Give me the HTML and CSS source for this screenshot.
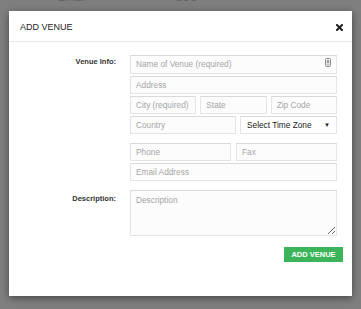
FILE: index.html
```html
<!doctype html>
<html>
<head>
<meta charset="utf-8">
<link rel="stylesheet" href="styles.css">
<title>Add Venue</title>
</head>
<body>

    <div class="behind"><span class="behind-email">Email</span><span class="behind-sso">SSO</span></div>

    <div class="modal">
        <header class="modal-header">
            <h1>ADD VENUE</h1>
            <button class="close" type="button" aria-label="Close">
                <svg width="7" height="7" viewBox="0 0 7 7"><path d="M1 1L6 6M6 1L1 6" stroke="#222" stroke-width="2" stroke-linecap="square"/></svg>
            </button>
        </header>

        <form class="modal-body">
            <label class="field-label">Venue Info:</label>
            <div class="fields">
                <div class="with-icon">
                    <input type="text" placeholder="Name of Venue (required)">
                    <svg class="field-icon" width="6" height="9" viewBox="0 0 6 9"><rect x="0.5" y="0.5" width="5" height="8" rx="1" fill="#eee" stroke="#888"/><path d="M3 2v3.2M3 6.2v1" stroke="#666" stroke-width="1.2"/></svg>
                </div>
                <input type="text" placeholder="Address">
                <div class="row row-three">
                    <input type="text" placeholder="City (required)">
                    <input type="text" placeholder="State">
                    <input type="text" placeholder="Zip Code">
                </div>
                <div class="row row-country">
                    <input type="text" placeholder="Country">
                    <div class="select">Select Time Zone<span class="caret">&#9660;</span></div>
                </div>

                <div class="row row-two group">
                    <input type="text" placeholder="Phone">
                    <input type="text" placeholder="Fax">
                </div>
                <input type="text" placeholder="Email Address">
            </div>

            <label class="field-label desc-label">Description:</label>
            <textarea placeholder="Description"></textarea>
        </form>

        <div class="modal-footer">
            <button class="btn-add" type="button">ADD VENUE</button>
        </div>
    </div>

</body>
</html>
```

FILE: styles.css
```css
html
{
    background:#7f7f7f;
}
body
{
    margin:0;
    height:309px;
    overflow:hidden;
    font-family:"Liberation Sans", Arial, sans-serif;
    color:#333;
}
.behind
{
    height:11px;
    overflow:hidden;
    font-size:11px;
    line-height:11px;
    color:#5e5e5e;
    position:relative;
}
.behind span
{
    position:absolute;
    top:-8px;
}
.behind-email { left:58px; }
.behind-sso { left:175px; }

.modal
{
    margin:0 9px;
    height:285px;
    background:#fff;
    box-shadow:0 2px 8px rgba(0,0,0,.45);
    display:flex;
    flex-direction:column;
}
.modal-header
{
    height:30px;
    padding:0 9px 0 11px;
    display:flex;
    align-items:center;
    justify-content:space-between;
    border-bottom:1px solid #e8e8e8;
}
h1
{
    margin:0;
    font:normal normal 9px/12px "Liberation Sans", Arial, sans-serif;
    color:#222;
    padding-top:1px;
}
.close
{
    border:none;
    background:none;
    padding:0;
    width:7px;
    height:7px;
    display:flex;
    margin-top:2px;
}
.modal-body
{
    margin:0;
    padding:11px 15px 0 9px;
    display:grid;
    grid-template-columns:98px 1fr;
    column-gap:14px;
    row-gap:9px;
}
.field-label
{
    text-align:right;
    font:normal bold 7.5px/10px "Liberation Sans", Arial, sans-serif;
    color:#333;
    padding-top:4px;
}
.desc-label
{
    padding-top:4px;
}
.fields
{
    display:flex;
    flex-direction:column;
    gap:2px;
}
.fields .group
{
    margin-top:7px;
}
input, textarea, .select
{
    box-sizing:border-box;
    width:100%;
    height:18px;
    margin:0;
    border:1px solid #e4e4e4;
    border-top-color:#d9d9d9;
    background:#fcfcfc;
    padding:0 5px;
    font:normal normal 8.3px/10px "Liberation Sans", Arial, sans-serif;
    color:#333;
    outline:none;
}
input::placeholder, textarea::placeholder
{
    color:#a5a5a5;
}
.with-icon
{
    position:relative;
}
.with-icon input
{
    height:19px;
}
.field-icon
{
    position:absolute;
    right:6px;
    top:5px;
}
.row
{
    display:grid;
    gap:4px;
}
.row-three { grid-template-columns:1fr 1fr 1fr; }
.row-country { grid-template-columns:1fr 97px; }
.row-two { grid-template-columns:1fr 1fr; gap:5px; }
.select
{
    display:flex;
    align-items:center;
    justify-content:space-between;
    padding:0 6px 0 6px;
    background:#fff;
    color:#222;
}
.caret
{
    font-size:6px;
    color:#222;
}
textarea
{
    height:46px;
    padding:4px 5px;
    resize:vertical;
}
.modal-footer
{
    display:flex;
    justify-content:flex-end;
    padding:11px 9px 0 0;
}
.btn-add
{
    width:59px;
    height:15px;
    border:none;
    padding:0;
    background:#3cb55a;
    color:#fff;
    font:normal bold 7.5px/15px "Liberation Sans", Arial, sans-serif;
}
```
